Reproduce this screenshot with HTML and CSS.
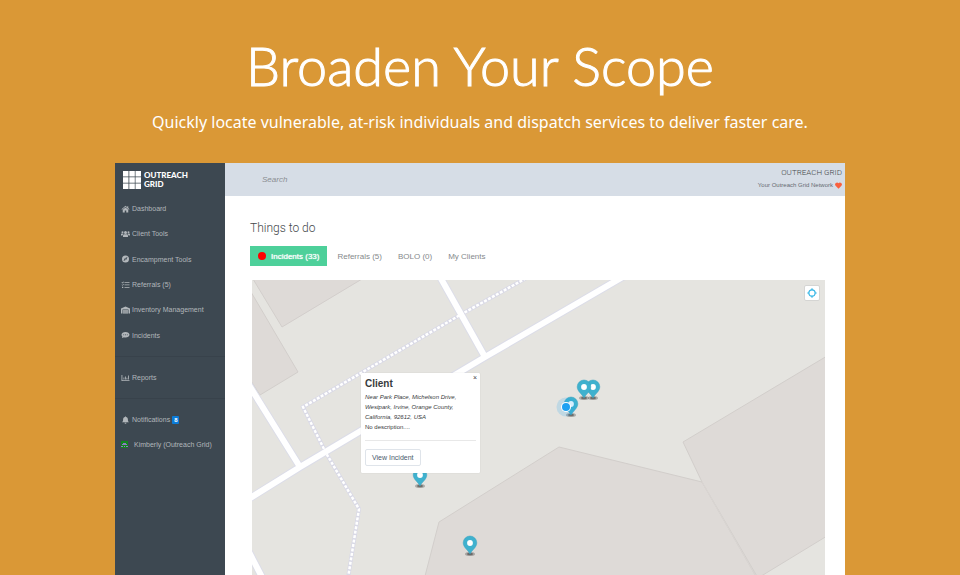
FILE: index.html
```html
<!DOCTYPE html>
<html lang="en">
  <head>
    <meta charset="utf-8">
    <title>Outreach Grid</title>
    <link rel="stylesheet" href="styles.css">
  </head>
  <body>
    <header class="hero">
      <h1 class="hero-title">Broaden Your Scope</h1>
      <p class="hero-text">Quickly locate vulnerable, at-risk individuals and dispatch services to deliver faster care.</p>
    </header>

    <div class="app">
      <aside class="sidebar">
        <a href="#" class="logo">
          <svg class="logo-grid" viewBox="0 0 18 18" fill="#fff">
            <path d="M0 0h5.500v5.500H0zM6.300 0h5.500v5.500h-5.500zM12.500 0H18v5.500h-5.500zM0 6.300h5.500v5.500H0zM6.300 6.300h5.500v5.500h-5.500zM12.500 6.300H18v5.500h-5.500zM0 12.500h5.500V18H0zM6.300 12.500h5.500V18h-5.500zM12.500 12.500H18V18h-5.500z"/>
          </svg>
          <span class="logo-name">OUTREACH<br>GRID</span>
        </a>

        <nav class="menu menu-main">
          <a href="#" class="menu-link">
            <svg class="icon" viewBox="0 0 16 16"><path d="M8 1.500 0 8.300l1.100 1.200L8 3.700l6.900 5.800L16 8.300l-2.500-2.200V2.500h-2v2zM8 5 2.500 9.600V15h4v-4h3v4h4V9.600z"/></svg>
            Dashboard
          </a>
          <a href="#" class="menu-link">
            <svg class="icon" viewBox="0 0 18 16"><circle cx="9" cy="5" r="3"/><circle cx="3" cy="4.500" r="2"/><circle cx="15" cy="4.500" r="2"/><path d="M4 14v-2c0-2 1.500-3.300 3-3.300h4c1.500 0 3 1.300 3 3.300v2zM0 11V9c0-1 1-1.800 2-1.800h2.500L5 8c-1.200.700-2 1.800-2.100 3zM18 11V9c0-1-1-1.800-2-1.800h-2.500L13 8c1.200.700 2 1.800 2.100 3z"/></svg>
            Client Tools
          </a>
          <a href="#" class="menu-link">
            <svg class="icon" viewBox="0 0 16 16"><path fill-rule="evenodd" d="M8 1a7 7 0 1 0 0 14A7 7 0 0 0 8 1zm4 3-2.500 5.500L4 12l2.500-5.500zM8 7a1 1 0 1 0 0 2 1 1 0 0 0 0-2z"/></svg>
            Encampment Tools
          </a>
          <a href="#" class="menu-link">
            <svg class="icon" viewBox="0 0 16 16"><path d="M6 2.500h10v1.500H6zM6 7.200h10v1.500H6zM6 12h10v1.500H6zM0 3l1-.8 1 1L4.200 1l.8.900-3 3zM0 7.700l1-.8 1 1 2.200-2.200.8.900-3 3zM1 11.500h2.500V14H1z"/></svg>
            Referrals (5)
          </a>
          <a href="#" class="menu-link">
            <svg class="icon" viewBox="0 0 18 16"><path fill-rule="evenodd" d="M9 1 0 5v10h3V7h12v8h3V5zM4 8h10v1.700H4zm0 2.600h10v1.700H4zm0 2.600h10V15H4z"/></svg>
            Inventory Management
          </a>
          <a href="#" class="menu-link">
            <svg class="icon" viewBox="0 0 16 16"><path fill-rule="evenodd" d="M8 2C3.600 2 0 4.500 0 7.700c0 1.400.700 2.600 1.800 3.600C1.600 12.600.5 14 .5 14c2 0 3.400-.800 4.200-1.400 1 .3 2.100.5 3.300.5 4.400 0 8-2.500 8-5.500S12.400 2 8 2zM4.500 6.700a1 1 0 1 1 0 2 1 1 0 0 1 0-2zm3.500 0a1 1 0 1 1 0 2 1 1 0 0 1 0-2zm3.500 0a1 1 0 1 1 0 2 1 1 0 0 1 0-2z"/></svg>
            Incidents
          </a>
        </nav>

        <nav class="menu">
          <a href="#" class="menu-link">
            <svg class="icon" viewBox="0 0 16 16"><path d="M0 2h1.700v10.300H16V14H0zM4 7h1.700v4H4zM7 5h1.700v6H7zM10 7.500h1.700V11H10zM13 3h1.700v8H13z"/></svg>
            Reports
          </a>
        </nav>

        <nav class="menu">
          <a href="#" class="menu-link">
            <svg class="icon" viewBox="0 0 16 16"><path d="M7 1h2v1.200c2.300.5 3.800 2.400 3.800 4.800 0 3 .7 4 2.200 5.500H1C2.500 11 3.200 10 3.200 7c0-2.400 1.500-4.300 3.800-4.800zM6 13.300h4a2 2 0 0 1-4 0z"/></svg>
            Notifications
            <span class="badge">8</span>
          </a>
          <a href="#" class="menu-link user-link">
            <svg class="avatar" viewBox="0 0 7 7">
              <path fill="#12841f" d="M0 0h7v7H0z"/>
              <path fill="#8e7cc3" d="M2 2h3v1H2zM1 3h5v1H1zM0 5h2v1H0zM3 5h1v1H3zM5 5h2v1H5z"/>
            </svg>
            Kimberly (Outreach Grid)
          </a>
        </nav>
      </aside>

      <div class="main">
        <div class="topbar">
          <input type="search" class="search" placeholder="Search" aria-label="Search">
          <div class="network">
            <div class="network-name">OUTREACH GRID</div>
            <div class="network-text">
              Your Outreach Grid Network
              <svg class="heart" viewBox="0 0 16 15"><path fill="#f9603f" d="M8 15 1.300 8A4.300 4.300 0 0 1 8 2.500 4.300 4.300 0 0 1 14.700 8z"/></svg>
            </div>
          </div>
        </div>

        <main class="content">
          <h2 class="title">Things to do</h2>
          <div class="tabs">
            <button class="tab active"><span class="dot"></span>Incidents (33)</button>
            <button class="tab">Referrals (5)</button>
            <button class="tab">BOLO (0)</button>
            <button class="tab">My Clients</button>
          </div>

          <div class="map">
            <svg class="map-canvas" viewBox="0 0 573 295" preserveAspectRatio="xMinYMin slice">
              <defs>
                <g id="pin">
                  <ellipse cx="0" cy="0" rx="5" ry="2" fill="#000" opacity=".25"/>
                  <ellipse cx="0" cy="0" rx="3" ry="1.200" fill="#000" opacity=".35"/>
                  <path fill="#3fb1ce" stroke="#36a0bd" stroke-width=".5" d="M0 0C-1.500-3.500-6.800-6.500-6.800-11.200a6.800 6.800 0 0 1 13.600 0C6.800-6.500 1.500-3.500 0 0z"/>
                  <circle cx="0" cy="-11" r="2.900" fill="#fff"/>
                </g>
              </defs>

              <!-- buildings -->
              <g fill="#dedad7" stroke="#d2cecb">
                <path d="M1-1 30 47 110-1z"/>
                <path d="M-1 12 46 92 8 115-1 101z"/>
                <path d="M172 300 187 242 307 167 450 202 506 300z"/>
                <path d="M431 162 575 76V256L506 298 450 202z"/>
              </g>
              <path d="M450 202 506 300" stroke="#dad6d3" stroke-width="1"/>

              <!-- roads -->
              <g fill="none" stroke="#dcdde8" stroke-width="8">
                <path d="M-5 220 48 187 233 77 374-5M187-5 233 77M-5 102 48 187M-3 272 12 301"/>
              </g>
              <path fill="none" stroke="#d9d9e6" stroke-width="4" d="M278-4 208 35 51 127 74 173 107 229 96 298"/>
              <path fill="none" stroke="#fff" stroke-width="2.500" stroke-dasharray="3 1.500" d="M278-4 208 35 51 127 74 173 107 229 96 298"/>
              <g fill="none" stroke="#fff" stroke-width="6">
                <path d="M-5 220 48 187 233 77 374-5M187-5 233 77M-5 102 48 187M-3 272 12 301"/>
              </g>

              <use href="#pin" x="341" y="118"/>
              <use href="#pin" x="332" y="118"/>
              <use href="#pin" x="319" y="135"/>
              <use href="#pin" x="168" y="206"/>
              <use href="#pin" x="218" y="274"/>

              <!-- current position -->
              <circle cx="314" cy="127" r="9.500" fill="#1da1f2" opacity=".18"/>
              <circle cx="314" cy="127" r="5" fill="#fff"/>
              <circle cx="314" cy="127" r="4" fill="#1da1f2"/>
            </svg>

            <button class="locate" aria-label="Find my location">
              <svg viewBox="0 0 16 16" width="10" height="10" fill="none" stroke="#33b5e5" stroke-width="1.800"><circle cx="8" cy="8" r="5"/><path d="M8 .5v3M8 12.500v3M.5 8h3M12.500 8h3"/></svg>
            </button>

            <div class="popup">
              <button class="popup-close" aria-label="Close">×</button>
              <h3 class="popup-title">Client</h3>
              <p class="popup-text"><em>Near Park Place, Michelson Drive, Westpark, Irvine, Orange County, California, 92612, USA</em><br>No description....</p>
              <hr class="popup-line">
              <button class="view-btn">View Incident</button>
            </div>
          </div>
        </main>
      </div>
    </div>
  </body>
</html>
```

FILE: styles.css
```css
* {
  box-sizing: border-box;
}

body {
  margin: 0;
  height: 100vh;
  display: flex;
  flex-direction: column;
  overflow: hidden;
  background-color: #da9836;
  font-family: "Liberation Sans", Arial, sans-serif;
}

button {
  font-family: inherit;
  cursor: pointer;
}

a {
  text-decoration: none;
}

.hero {
  padding: 32px 20px 29px;
  text-align: center;
  color: white;
}

.hero-title {
  margin: 0;
  font-family: Lato, sans-serif;
  font-size: 54px;
  font-weight: 300;
  line-height: 68px;
  -webkit-text-stroke: 1px white;
}

.hero-text {
  margin: 10px 0 0;
  font-family: "Noto Sans", sans-serif;
  font-size: 16px;
  line-height: 24px;
}

.app {
  flex: 1;
  display: flex;
  width: 100%;
  max-width: 730px;
  min-height: 0;
  margin: 0 auto;
  background-color: white;
}

/* sidebar */
.sidebar {
  width: 110px;
  flex-shrink: 0;
  background-color: #3d4851;
}

.logo {
  display: flex;
  gap: 3px;
  padding: 8px 8px 7px;
  color: white;
}

.logo-grid {
  width: 18px;
  height: 18px;
}

.logo-name {
  font-family: Lato, sans-serif;
  font-size: 8px;
  font-weight: 900;
  line-height: 9px;
}

.menu {
  display: grid;
  padding-bottom: 8px;
}

.menu-main {
  height: 160px;
}

.menu + .menu {
  padding-top: 8px;
  border-top: 1px solid #38424b;
}

.menu-link {
  display: flex;
  align-items: center;
  gap: 2px;
  min-height: 25px;
  padding-left: 6px;
  color: #b2b7bb;
  font-size: 7px;
}

.icon {
  width: 9px;
  height: 8px;
  fill: #b2b7bb;
}

.badge {
  padding: 0 2px;
  border-radius: 1px;
  background-color: #0b7bd8;
  color: white;
  font-size: 6px;
  font-weight: bold;
  line-height: 8px;
}

.user-link {
  gap: 6px;
}

.avatar {
  width: 7px;
  height: 7px;
}

/* top bar */
.main {
  flex: 1;
  min-width: 0;
}

.topbar {
  display: flex;
  justify-content: space-between;
  height: 33px;
  padding: 0 3px 0 37px;
  background-color: #d6dde6;
}

.search {
  width: 200px;
  padding: 0;
  border: none;
  outline: none;
  background: none;
  font-family: inherit;
  font-size: 8px;
  font-style: italic;
}

.search::placeholder {
  color: #8a8d91;
}

.network {
  padding-top: 4px;
  text-align: right;
}

.network-name {
  color: #44484b;
  font-family: Roboto, sans-serif;
  font-size: 8px;
  font-weight: 300;
  line-height: 12px;
}

.network-text {
  display: flex;
  align-items: center;
  justify-content: flex-end;
  gap: 2px;
  color: #666b72;
  font-size: 6px;
  line-height: 13px;
}

.heart {
  width: 7px;
  height: 7px;
}

/* content */
.content {
  padding: 24px 20px 0 25px;
}

.title {
  margin: 0 0 10px;
  color: #44484b;
  font-family: Roboto, sans-serif;
  font-size: 12px;
  font-weight: 300;
  line-height: 16px;
}

.tabs {
  display: flex;
}

.tab {
  height: 20px;
  padding: 0 8px;
  border: none;
  background: none;
  color: #85898c;
  font-size: 8px;
}

.tab.active {
  display: flex;
  align-items: center;
  gap: 5px;
  margin-right: 2px;
  background-color: #4dd09a;
  color: white;
  text-shadow: 0 0 1px white;
}

.dot {
  width: 8px;
  height: 8px;
  border-radius: 50%;
  background-color: red;
}

/* map */
.map {
  position: relative;
  margin: 14px 0 0 2px;
  overflow: hidden;
  background-color: #e5e4e0;
}

.map-canvas {
  display: block;
  width: 100%;
}

.locate {
  position: absolute;
  top: 5px;
  right: 5px;
  display: flex;
  align-items: center;
  justify-content: center;
  width: 16px;
  height: 16px;
  padding: 0;
  border: 1px solid #d5d5d3;
  border-radius: 2px;
  background-color: white;
}

.popup {
  position: absolute;
  top: 93px;
  left: 109px;
  width: 119px;
  padding: 5px 4px 7px;
  border-radius: 1px;
  background-color: white;
  box-shadow: 0 0 1px rgba(0, 0, 0, 0.2);
}

.popup-close {
  position: absolute;
  top: 1px;
  right: 3px;
  padding: 0;
  border: none;
  background: none;
  color: #444;
  font-size: 7px;
}

.popup-title {
  margin: 0;
  color: #373a3c;
  font-size: 10px;
  line-height: 12px;
}

.popup-text {
  margin: 2px 0 8px;
  color: #373a3c;
  font-size: 6px;
  line-height: 10px;
}

.popup-line {
  margin: 0 0 8px;
  border: none;
  border-top: 1px solid #e8e8e8;
}

.view-btn {
  display: block;
  height: 17px;
  padding: 0 6px;
  border: 1px solid #dfe4ea;
  border-radius: 2px;
  background-color: white;
  color: #4a5a6c;
  font-size: 7px;
}
```
